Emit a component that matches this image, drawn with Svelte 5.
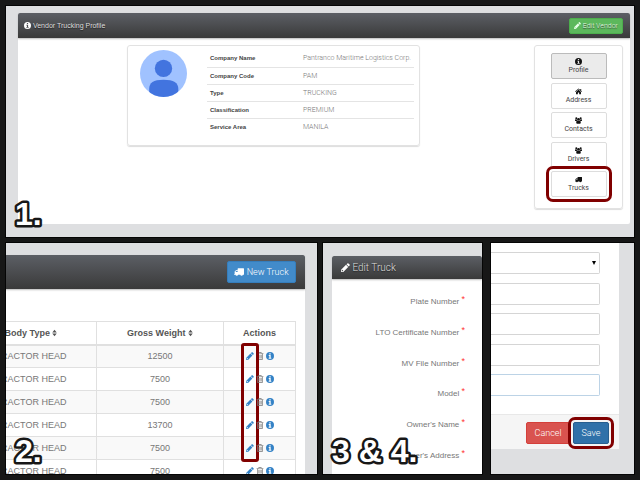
<script>
  const details = [
    ['Company Name', 'Pantranco Maritime Logistics Corp.'],
    ['Company Code', 'PAM'],
    ['Type', 'TRUCKING'],
    ['Classification', 'PREMIUM'],
    ['Service Area', 'MANILA']
  ];
  const tabs = [
    ['info', 'Profile'],
    ['home', 'Address'],
    ['group', 'Contacts'],
    ['group', 'Drivers'],
    ['truck', 'Trucks']
  ];
  const weights = [12500, 7500, 7500, 13700, 7500, 7500];
  const fields = ['Plate Number', 'LTO Certificate Number', 'MV File Number', 'Model', "Owner's Name", "Owner's Address"];
  const inputs = ['Fuel Type', 'Engine Number', 'Chassis Number', 'Remarks'];
</script>

{#snippet icon(name)}
  {#if name === 'info'}
    <svg class="icon" viewBox="0 0 16 16" aria-hidden="true"><path fill-rule="evenodd" d="M8 0a8 8 0 1 1 0 16A8 8 0 0 1 8 0ZM6.6 2.4v2.4h2.8V2.4ZM5.4 6.2v1.7h1.3v3.8H5.4v1.7h5.2v-1.7H9.4V6.2Z" /></svg>
  {:else if name === 'pencil'}
    <svg class="icon" viewBox="0 0 16 16" aria-hidden="true"><path fill-rule="evenodd" d="M11.4.7a1.3 1.3 0 0 1 1.8 0l2.1 2.1a1.3 1.3 0 0 1 0 1.8l-1.6 1.6-3.9-3.9ZM8.9 3.2l3.9 3.9-8.7 8.7H.2v-3.9ZM1.5 12.7v1.8h1.8l.8-.8-1.8-1.8Z" /></svg>
  {:else if name === 'home'}
    <svg class="icon" viewBox="0 0 16 16" aria-hidden="true"><path d="M8 1.2 16 8l-.9 1L8 3 .9 9 0 8ZM12 2h2.2v4L12 4.2ZM8 4.2l5.6 4.7v5.6H9.5v-4h-3v4H2.4V8.9Z" /></svg>
  {:else if name === 'group'}
    <svg class="icon" viewBox="0 0 16 16" aria-hidden="true"><circle cx="3" cy="3" r="2.3" /><circle cx="13" cy="3" r="2.3" /><circle cx="8" cy="5.2" r="3.1" /><path d="M0 8.4C0 6 .8 5 1.8 5c.8.6 1.8.7 2.5.5.1 1 .5 1.8 1.1 2.5-1 0-1.9.5-2.5 1.2H1Q0 9.2 0 8.4ZM16 8.4C16 6 15.2 5 14.2 5c-.8.6-1.8.7-2.5.5-.1 1-.5 1.8-1.1 2.5 1 0 1.9.5 2.5 1.2H15Q16 9.2 16 8.4ZM2.800 13c0-3 1-4.800 2.700-4.800 1.500 1.200 3.500 1.200 5 0 1.700 0 2.700 1.800 2.700 4.800 0 1.500-.8 2.300-2.200 2.300H5c-1.400 0-2.200-.8-2.200-2.300Z" /></svg>
  {:else if name === 'truck'}
    <svg class="icon" viewBox="0 0 16 16" aria-hidden="true"><path fill-rule="evenodd" d="M6.5 2H15.3q.7 0 .7.7v9.600h-1.700a2.200 2.200 0 0 1-4.300 0H6.600a2.200 2.200 0 0 1-4.300 0H.2v-1.100H1V7.300L3.600 4.600h2.200V2.700q0-.7.7-.7ZM2.400 8h3.400V5.800H4.200L2.400 7.600Z" /></svg>
  {:else if name === 'trash'}
    <svg class="icon" viewBox="0 0 16 16" aria-hidden="true"><path fill-rule="evenodd" d="M5.5 0h5l1 2.300H15v1.400h-1.300V14q0 2-1.700 2H4q-1.700 0-1.700-2V3.700H1V2.300h3.500ZM6.300 1.300 6 2.300h4l-.3-1ZM3.700 3.700V14q0 .6.6.6h7.400q.6 0 .6-.6V3.700ZM5 5.500h1.300V13H5Zm2.400 0h1.300V13H7.400Zm2.400 0h1.300V13H9.800Z" /></svg>
  {:else if name === 'sort'}
    <svg class="icon sort" viewBox="0 0 10 16" aria-hidden="true"><path d="M5 1.500 9.500 7h-9ZM.5 9h9L5 14.500Z" /></svg>
  {/if}
{/snippet}

{#snippet step(label)}
  <svg class="step" viewBox="0 0 100 40"><text x="4" y="32">{label}</text></svg>
{/snippet}

<main>
  <section class="shot">
    <div class="card vendor">
      <header class="bar small">
        <h2>{@render icon('info')} Vendor Trucking Profile</h2>
        <button class="btn green">{@render icon('pencil')} Edit Vendor</button>
      </header>
      <div class="profile">
        <article class="box summary">
          <svg class="avatar" viewBox="0 0 46 46" role="img" aria-label="Vendor avatar">
            <defs><clipPath id="disc"><circle cx="23" cy="23" r="23" /></clipPath></defs>
            <circle cx="23" cy="23" r="23" fill="#a0c2ff" />
            <g fill="#4274df" clip-path="url(#disc)">
              <circle cx="23" cy="18" r="8.500" />
              <path d="M9 38c0-6 4-9 14-9s14.500 3 14.500 9v8H9Z" />
            </g>
          </svg>
          <dl>
            {#each details as [term, value]}
              <div><dt>{term}</dt><dd>{value}</dd></div>
            {/each}
          </dl>
        </article>
        <nav class="box tabs">
          {#each tabs as [glyph, label], i}
            <button class:active={i === 0} class:marked={i === 4}>{@render icon(glyph)}<span>{label}</span></button>
          {/each}
        </nav>
      </div>
    </div>
    {@render step('1.')}
  </section>

  <section class="shot trucks">
    <div class="card list">
      <header class="bar large">
        <button class="btn blue">{@render icon('truck')} New Truck</button>
      </header>
      <table>
        <thead>
          <tr><th>Body Type {@render icon('sort')}</th><th class="weight">Gross Weight {@render icon('sort')}</th><th class="actions">Actions</th></tr>
        </thead>
        <tbody>
          {#each weights as weight, i}
            <tr>
              <td>TRACTOR HEAD</td>
              <td>{weight}</td>
              <td>
                <div class="tools">
                  <a href="#edit" aria-label="Edit">{@render icon('pencil')}</a>
                  <a href="#delete" class="grey" aria-label="Delete">{@render icon('trash')}</a>
                  <a href="#info" aria-label="Info">{@render icon('info')}</a>
                  {#if i === 0}<i class="ring"></i>{/if}
                </div>
              </td>
            </tr>
          {/each}
        </tbody>
      </table>
    </div>
    {@render step('2.')}
  </section>

  <div class="pair">
    <section class="shot">
      <div class="card edit">
        <header class="bar medium"><h2>{@render icon('pencil')} Edit Truck</h2></header>
        <div class="labels">
          {#each fields as field}
            <p>{field} <sup>*</sup></p>
          {/each}
        </div>
      </div>
      {@render step('3 & 4.')}
    </section>
    <section class="shot">
      <form class="card" onsubmit={(e) => e.preventDefault()}>
        <div class="inputs">
          <div class="picker"><select aria-label="Body Type"><option></option></select></div>
          {#each inputs as name, i}
            <input type="text" aria-label={name} class:focus={i === 3} />
          {/each}
        </div>
        <footer>
          <button type="button" class="btn red">Cancel</button>
          <button type="submit" class="btn navy">Save</button>
        </footer>
      </form>
    </section>
  </div>
</main>

<style>
  :global(body) { margin: 0; background: #171717; }
  * { box-sizing: border-box; }
  main {
    display: grid;
    grid-template: repeat(2, minmax(0, 1fr)) / repeat(2, minmax(0, 1fr));
    gap: 6px;
    height: 100vh;
    padding: 6px;
    font: 8px/12px "Liberation Sans", Arial, sans-serif;
    color: #777;
  }
  main > .shot:first-child { grid-column: 1 / -1; }
  .pair { display: grid; grid-template-columns: minmax(0, 159fr) minmax(0, 143fr); gap: 9px; }
  .shot { position: relative; overflow: hidden; background: #dedfe1; box-shadow: 0 0 0 1px #050505; }
  .card { background: #fff; }
  h2 { margin: 0; font-weight: 300; color: #ddd; font-size: inherit; }
  button, input, select { font: inherit; }
  .icon { width: 8px; height: 8px; fill: currentColor; vertical-align: -1px; }
  .bar {
    display: flex;
    align-items: center;
    justify-content: space-between;
    background: linear-gradient(#5c5f65, #3a3a3a);
    border-radius: 2px 2px 0 0;
    box-shadow: 0 1px 2px #bbb;
    font-family: Roboto, sans-serif;
    text-shadow: 0 1px 1px #222;
  }
  .bar h2 .icon { color: #fff; }
  .btn { border: 1px solid; border-radius: 2px; color: #fff; padding: 0; white-space: nowrap; }
  .green { background: #5cb85c; border-color: #4cae4c; width: 54px; height: 16px; color: #e8ffe8; text-shadow: 0 1px 1px #333; font-family: Roboto, sans-serif; font-weight: 300; }
  .blue { background: #428bca; border-color: #357ebd; width: 69px; height: 22px; font-weight: 300; text-shadow: none; }
  .red { background: #d9534f; border-color: #d43f3a; width: 44px; height: 22px; }
  .navy { background: #3071a9; border-color: #285e8e; width: 36px; height: 22px; outline: 3px solid #800000; outline-offset: 2px; border-radius: 2px; }

  .vendor { margin: 7px 4px 0 12px; height: 211px; border-radius: 2px; }
  .small { height: 25px; padding: 0 7px 0 6px; font-size: 7px; font-family: "Liberation Sans", Arial, sans-serif; }
  .small .icon { width: 7px; height: 7px; }
  .profile { display: flex; justify-content: space-between; align-items: flex-start; padding: 7px 7px 0 109px; }
  .box { border: 1px solid #e2e2e2; border-radius: 3px; box-shadow: 0 1px 1px #ddd; }
  .summary { display: flex; gap: 20px; width: 293px; height: 101px; padding: 4px 7px 0 12px; }
  .avatar { flex: none; width: 47px; height: 47px; }
  dl { flex: 1; margin: 0; font-size: 7px; }
  dl div { display: flex; height: 17px; padding: 0 3px; line-height: 17px; }
  dl div + div { border-top: 1px solid #e4e4e4; }
  dt { width: 93px; font-size: 6px; font-weight: bold; color: #444; }
  dd { margin: 0; white-space: nowrap; font-family: Roboto, sans-serif; font-weight: 300; }
  .tabs { display: flex; flex-direction: column; align-items: center; justify-content: space-between; width: 89px; height: 164px; padding: 7px 0 11px; }
  .tabs button { display: flex; flex-direction: column; align-items: center; width: 56px; height: 26px; padding: 4px 0 0; border: 1px solid #ddd; border-radius: 2px; background: #fff; color: #444; font: 7px/11px Roboto, sans-serif; }
  .tabs .icon { width: 7px; height: 7px; flex: none; color: #111; }
  .tabs .active { background: #ebebeb; border-color: #bbb; }
  .tabs .marked { outline: 3px solid #800000; outline-offset: 2px; }

  .trucks { display: flex; justify-content: flex-end; padding: 12px 12px 0 0; }
  .list { flex: none; width: 340px; }
  .large { justify-content: flex-end; height: 34px; padding-right: 9px; font-size: 9px; }
  .large .icon { width: 10px; height: 10px; vertical-align: -2px; }
  table { width: 331px; margin-top: 32px; border-collapse: collapse; table-layout: fixed; font-size: 9px; text-align: center; }
  th, td { height: 23px; padding: 0; border: 1px solid #e0e0e0; }
  th { color: #555; border-bottom-width: 2px; }
  .weight { width: 127px; }
  .actions { width: 72px; }
  tbody tr:nth-child(odd) { background: #f9f9f9; }
  .sort { width: 5px; }
  .tools { position: relative; display: flex; justify-content: center; gap: 2px; }
  .tools a { display: flex; color: #3482c6; }
  .tools .grey { color: #777; }
  .ring { position: absolute; top: -9px; left: 17px; width: 18px; height: 119px; border: 3px solid #800000; border-radius: 3px; }

  .edit { margin: 13px 0 0 9px; height: 100%; }
  .medium { height: 23px; padding-left: 9px; font-size: 10px; }
  .medium .icon { width: 9px; height: 9px; }
  .labels { display: grid; grid-template-rows: repeat(6, 1fr); align-items: center; height: 184px; margin-top: 8px; padding-right: 17px; text-align: right; }
  p { margin: 0; }
  sup { color: #f33; font-size: 9px; line-height: 0; vertical-align: 2px; }

  form { margin-right: 15px; }
  .inputs { display: flex; flex-direction: column; justify-content: space-between; height: 171px; padding: 9px 19px 18px 0; }
  .inputs input, .inputs select { display: block; width: 100%; height: 22px; padding: 0; border: 1px solid #d5d5d5; border-left: 0; border-radius: 0 2px 2px 0; background: #fff; appearance: none; }
  .inputs .focus { border-color: #bcd3e6; }
  .picker { position: relative; }
  .picker::after { content: ""; position: absolute; right: 4px; top: 9px; border: 2px solid transparent; border-top: 4px solid #000; border-bottom: 0; }
  footer { display: flex; justify-content: flex-end; gap: 3px; height: 35px; padding: 7px 10px 0 0; background: #f5f5f5; border-top: 1px solid #e8e8e8; font: 300 9px/12px Roboto, sans-serif; }

  .step { position: absolute; left: 5px; bottom: 4px; width: 100px; height: 40px; font: bold 32px "Liberation Sans", Arial, sans-serif; }
  .step text { fill: #fff; stroke: #171717; stroke-width: 5px; stroke-linejoin: round; paint-order: stroke; }
</style>
